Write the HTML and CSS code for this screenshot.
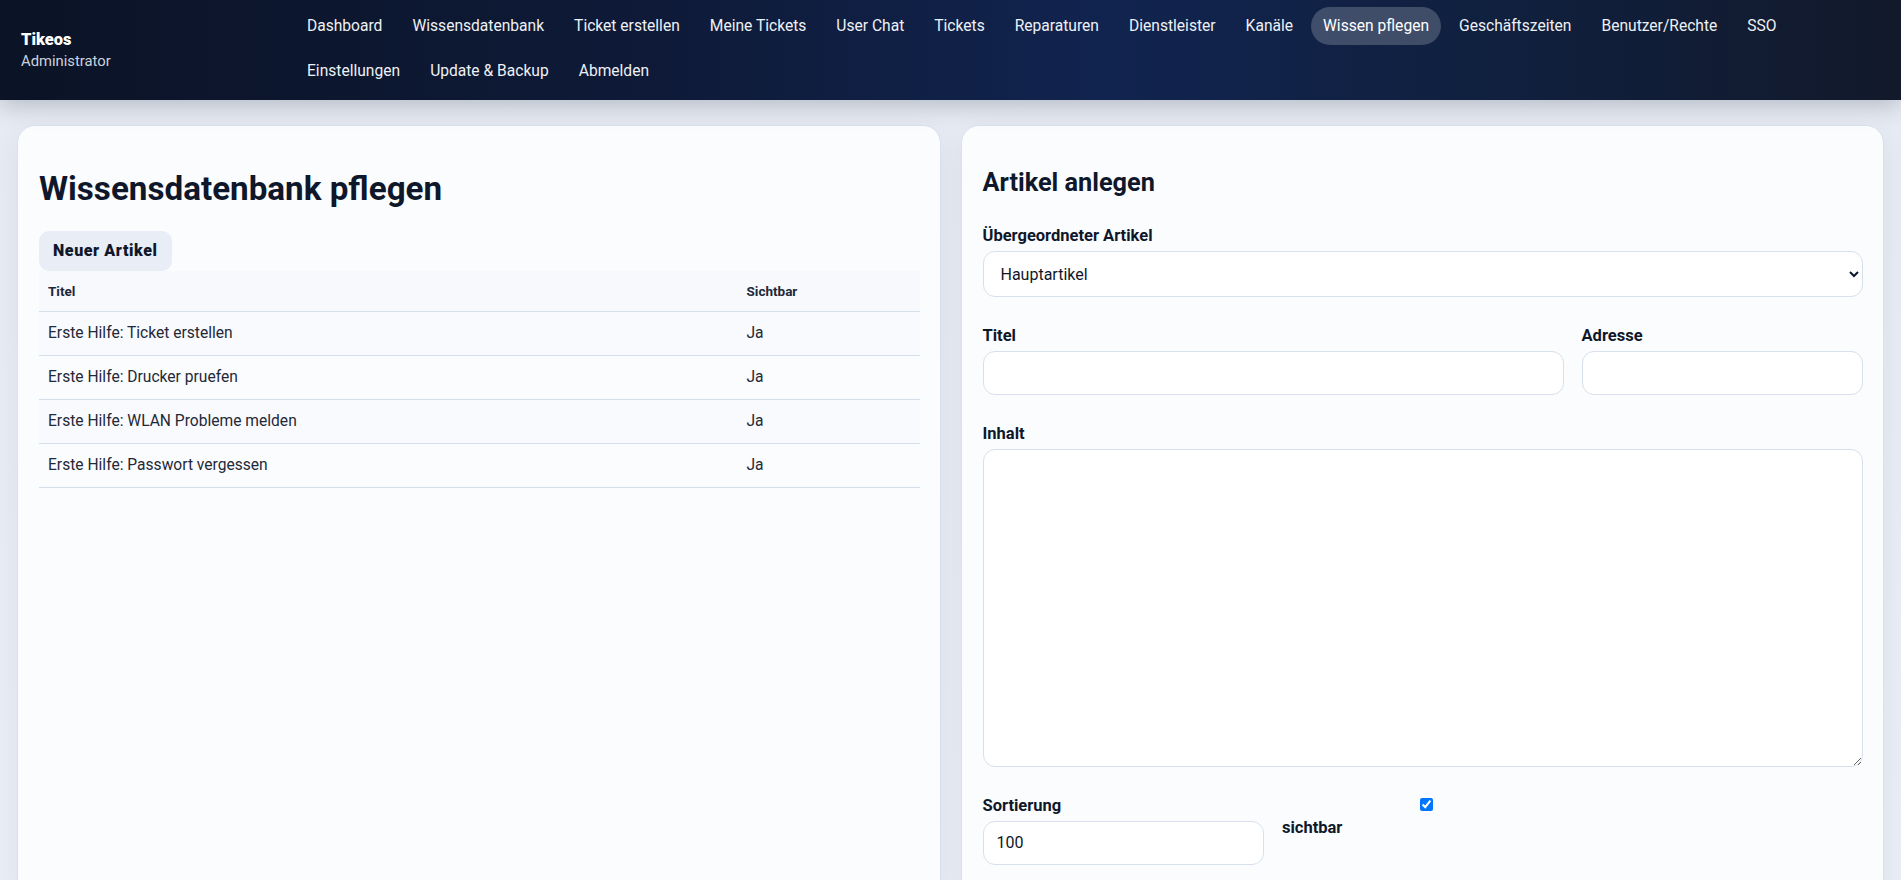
FILE: index.html
```html
<!DOCTYPE html>
<html lang="de">
<head>
  <meta charset="UTF-8">
  <meta name="viewport" content="width=device-width, initial-scale=1.0">
  <title>Tikeos – Wissen pflegen</title>
  <link rel="stylesheet" href="styles.css">
</head>
<body>
  <header class="topbar">
    <div class="brand">
      <strong>Tikeos</strong>
      <span>Administrator</span>
    </div>
    <nav class="mainnav">
      <a href="#">Dashboard</a>
      <a href="#">Wissensdatenbank</a>
      <a href="#">Ticket erstellen</a>
      <a href="#">Meine Tickets</a>
      <a href="#">User Chat</a>
      <a href="#">Tickets</a>
      <a href="#">Reparaturen</a>
      <a href="#">Dienstleister</a>
      <a href="#">Kanäle</a>
      <a href="#" class="active">Wissen pflegen</a>
      <a href="#">Geschäftszeiten</a>
      <a href="#">Benutzer/Rechte</a>
      <a href="#">SSO</a>
      <a href="#">Einstellungen</a>
      <a href="#">Update &amp; Backup</a>
      <a href="#">Abmelden</a>
    </nav>
  </header>

  <main class="layout">
    <section class="card">
      <h1>Wissensdatenbank pflegen</h1>
      <button class="btn-soft" type="button">Neuer Artikel</button>
      <table class="list">
        <thead>
          <tr><th>Titel</th><th class="col-vis">Sichtbar</th></tr>
        </thead>
        <tbody>
          <tr><td>Erste Hilfe: Ticket erstellen</td><td>Ja</td></tr>
          <tr><td>Erste Hilfe: Drucker pruefen</td><td>Ja</td></tr>
          <tr><td>Erste Hilfe: WLAN Probleme melden</td><td>Ja</td></tr>
          <tr><td>Erste Hilfe: Passwort vergessen</td><td>Ja</td></tr>
        </tbody>
      </table>
    </section>

    <section class="card">
      <h2>Artikel anlegen</h2>
      <form class="article-form">
        <div class="field">
          <label for="parent">Übergeordneter Artikel</label>
          <select id="parent">
            <option>Hauptartikel</option>
          </select>
        </div>

        <div class="row3">
          <div class="field span2">
            <label for="title">Titel</label>
            <input type="text" id="title">
          </div>
          <div class="field">
            <label for="slug">Adresse</label>
            <input type="text" id="slug">
          </div>
        </div>

        <div class="field">
          <label for="content">Inhalt</label>
          <textarea id="content"></textarea>
        </div>

        <div class="row3">
          <div class="field">
            <label for="sort">Sortierung</label>
            <input type="number" id="sort" value="100">
          </div>
          <label class="check"><input type="checkbox" checked> sichtbar</label>
        </div>
      </form>
    </section>
  </main>
</body>
</html>
```

FILE: styles.css
```css
* { box-sizing: border-box; }
body { margin: 0; font-family: "Segoe UI", Roboto, "Liberation Sans", sans-serif; color: #0f172a; background: linear-gradient(180deg, #e6ebf3 0%, #eaeef6 100%); min-height: 100vh; }

/* top bar */
.topbar { display: flex; align-items: center; height: 100px; padding: 7px 20px 11px 21px; background: linear-gradient(90deg, #0b1326 0%, #0e1a38 35%, #11244f 58%, #10203f 78%, #12192b 100%); box-shadow: 0 6px 22px rgba(15, 23, 42, 0.22); position: relative; z-index: 1; }
.brand { flex: 0 0 274px; display: flex; flex-direction: column; margin-top: 5px; }
.brand strong { font-size: 16.5px; font-weight: 900; color: #fff; line-height: 20px; }
.brand span { font-size: 14.8px; color: #cbd2de; line-height: 20px; margin-top: 1px; }
.mainnav { display: flex; flex-wrap: wrap; gap: 7px 6px; align-self: flex-start; }
.mainnav a { color: #eef1f6; text-decoration: none; font-size: 15.6px; line-height: 22px; padding: 8px 12px; border-radius: 999px; }
.mainnav a.active { background: rgba(255, 255, 255, 0.2); color: #fff; }

/* page */
.layout { display: grid; grid-template-columns: 1fr 1fr; gap: 20px; padding: 25px 17px 25px 17px; }
.card { background: #fbfcfe; border: 1px solid #d8e1ee; border-radius: 18px; padding: 20px 20px 20px 21px; box-shadow: 0 10px 30px rgba(15, 23, 42, 0.06); }
.card h1 { font-size: 33.2px; line-height: 38px; font-weight: 700; margin: 24px 0 23px; }
.card h2 { font-size: 25.3px; line-height: 30px; font-weight: 700; margin: 22px 0 28px; }

.btn-soft { display: block; font: inherit; font-size: 16px; font-weight: 900; letter-spacing: 0.6px; line-height: 20px; color: #0f172a; background: #e8edf6; border: none; border-radius: 10px; padding: 10px 14px; cursor: pointer; }

/* article list */
.list { width: 100%; border-collapse: collapse; font-size: 15.6px; }
.list th { text-align: left; font-size: 13.5px; font-weight: 700; color: #1e293b; line-height: 20px; padding: 10px 9px; background: #f7f9fc; border-bottom: 1px solid #d4dfec; }
.list td { line-height: 19px; padding: 12px 9px; color: #1f2937; border-bottom: 1px solid #d4dfec; }
.list tbody tr:nth-child(odd) td { background: #f8fafd; }
.list .col-vis { width: 182px; }

/* form */
.field { margin-bottom: 29px; }
.field label, .check { display: block; font-size: 16.5px; font-weight: 700; line-height: 20px; margin-bottom: 5px; }
input[type=text], input[type=number], select, textarea { display: block; width: 100%; font: inherit; font-size: 16px; line-height: 20px; color: #0f172a; background: #fff; border: 1px solid #d7e0ec; border-radius: 12px; padding: 11px 13px; }
select { height: 46px; padding: 0 10px 0 13px; }
textarea { height: 318px; resize: vertical; margin-bottom: 2px; }
.row3 { display: grid; grid-template-columns: repeat(3, 1fr); gap: 0 18px; }
.span2 { grid-column: span 2; }
.check input { display: block; margin: 2px auto 7px; width: 13px; height: 13px; position: relative; left: 4px; }
```
